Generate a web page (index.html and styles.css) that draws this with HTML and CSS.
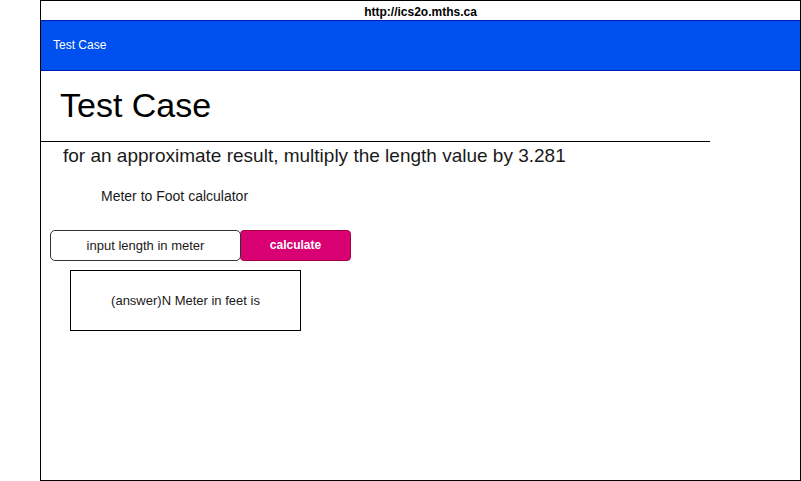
FILE: index.html
```html
<!DOCTYPE html>
<html>
<head>
<meta charset="utf-8">
<link rel="stylesheet" href="styles.css">
</head>
<body>
<div class="frame">
  <div class="urlbar">http://ics2o.mths.ca</div>
  <div class="appbar">Test Case</div>
  <div class="content">
    <h1 class="title">Test Case</h1>
    <div class="rule"></div>
    <p class="subtitle">for an approximate result, multiply the length value by 3.281</p>
    <p class="label">Meter to Foot calculator</p>
    <div class="controls">
      <div class="input">input length in meter</div>
      <div class="button">calculate</div>
    </div>
    <div class="answer">(answer)N Meter in feet is</div>
  </div>
</div>
</body>
</html>
```
FILE: styles.css
```css
* { box-sizing: border-box; }
html, body { margin: 0; padding: 0; background: #fff; }
body { font-family: "Liberation Sans", Arial, Helvetica, sans-serif; color: #000; }
.frame {
  margin-left: 40px;
  width: 761px;
  height: 481px;
  border: 1px solid #000;
  display: flex;
  flex-direction: column;
}
.urlbar {
  height: 19px;
  font-size: 12px;
  font-weight: bold;
  text-align: center;
  line-height: 22px;
  color: #000;
}
.appbar {
  height: 51px;
  background: #0050ef;
  border-top: 1px solid #001dbc;
  border-bottom: 1px solid #001dbc;
  color: #fff;
  font-size: 12px;
  line-height: 48px;
  padding-left: 12px;
}
.content {
  display: flex;
  flex-direction: column;
  align-items: flex-start;
}
.title {
  margin: 16px 0 0 19px;
  font-size: 34px;
  font-weight: normal;
  line-height: 37px;
  height: 37px;
}
.rule {
  margin-top: 17px;
  width: 669px;
  border-bottom: 1px solid #000;
  height: 1px;
}
.subtitle {
  margin: 4px 0 0 22px;
  font-size: 19px;
  line-height: 20px;
  color: #1a1a1a;
}
.label {
  margin: 20px 0 0 60px;
  font-size: 14px;
  line-height: 20px;
  color: #1a1a1a;
}
.controls {
  margin: 24px 0 0 9px;
  display: flex;
}
.input {
  width: 191px;
  height: 31px;
  border: 1px solid #333;
  border-radius: 5px;
  font-size: 13px;
  line-height: 29px;
  text-align: center;
  color: #1a1a1a;
  background: #fff;
  position: relative;
  z-index: 1;
}
.button {
  width: 111px;
  height: 31px;
  margin-left: -1px;
  background: #d80073;
  border: 1px solid #a50040;
  border-radius: 4px;
  color: #fff;
  font-size: 12px;
  font-weight: bold;
  line-height: 28px;
  text-align: center;
}
.answer {
  margin: 9px 0 0 29px;
  width: 231px;
  height: 61px;
  border: 1px solid #000;
  font-size: 13px;
  line-height: 59px;
  text-align: center;
  color: #1a1a1a;
}
```
